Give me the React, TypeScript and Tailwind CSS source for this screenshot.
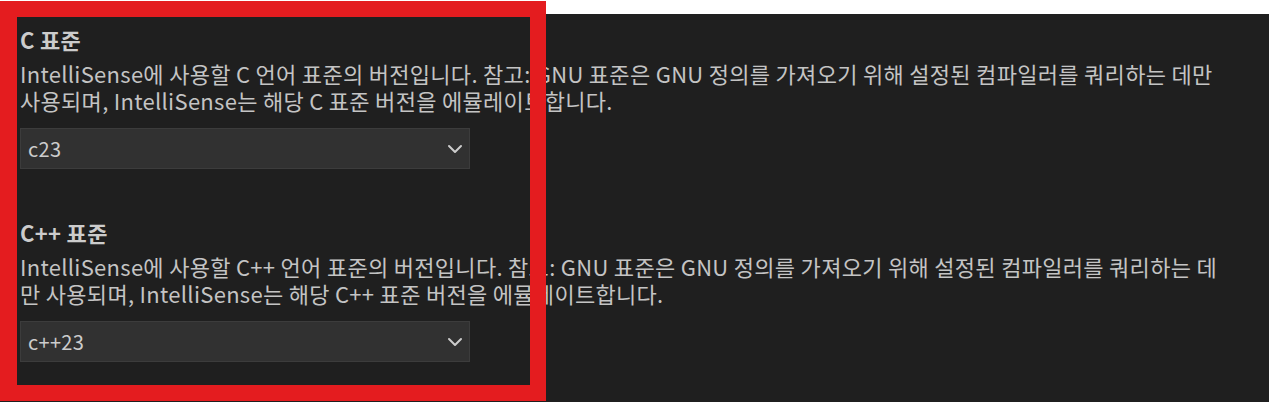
const settings = [
  {
    id: 'c',
    title: 'C 표준',
    description:
      'IntelliSense에 사용할 C 언어 표준의 버전입니다. 참고: GNU 표준은 GNU 정의를 가져오기 위해 설정된 컴파일러를 쿼리하는 데만 사용되며, IntelliSense는 해당 C 표준 버전을 에뮬레이트합니다.',
    value: 'c23',
  },
  {
    id: 'cpp',
    title: 'C++ 표준',
    description:
      'IntelliSense에 사용할 C++ 언어 표준의 버전입니다. 참고: GNU 표준은 GNU 정의를 가져오기 위해 설정된 컴파일러를 쿼리하는 데만 사용되며, IntelliSense는 해당 C++ 표준 버전을 에뮬레이트합니다.',
    value: 'c++23',
  },
];

function Chevron() {
  return (
    <svg width="16" height="10" viewBox="0 0 16 10" fill="none" className="text-[#cccccc]">
      <polyline points="2,2 8,8 14,2" stroke="currentColor" strokeWidth="2" strokeLinecap="round" strokeLinejoin="round" />
    </svg>
  );
}

function App() {
  return (
    <div
      className="relative h-[402px] w-full overflow-hidden bg-white"
      style={{ fontFamily: '"Noto Sans CJK KR", "Noto Sans", sans-serif' }}
    >
      <div className="mt-[14px] h-[388px] bg-[#1f1f1f] pl-[20px] pt-[12px]">
        {settings.map(s => (
          <div key={s.id} className="mb-[50px] w-[1203px]">
            <div className="text-[22px] font-semibold leading-[27px] tracking-[0.3px] text-[#cccccc]">{s.title}</div>
            <p className="mt-[7px] text-[22px] leading-[27px] tracking-[0.3px] text-[#c4c4c4]">{s.description}</p>
            <div className="mt-[14px] flex h-[41px] w-[450px] items-center justify-between border border-[#3c3c3c] bg-[#313131] pl-[7px] pr-[6px]">
              <span className="text-[20px] tracking-[0.3px] text-[#cccccc]">{s.value}</span>
              <Chevron />
            </div>
          </div>
        ))}
      </div>

      {/* red highlight frame drawn over the screenshot */}
      <div className="pointer-events-none absolute left-0 top-[1px] h-[400px] w-[546px] border-[16px] border-l-[17px] border-[#e41c1f]" />
    </div>
  );
}

export default App;
